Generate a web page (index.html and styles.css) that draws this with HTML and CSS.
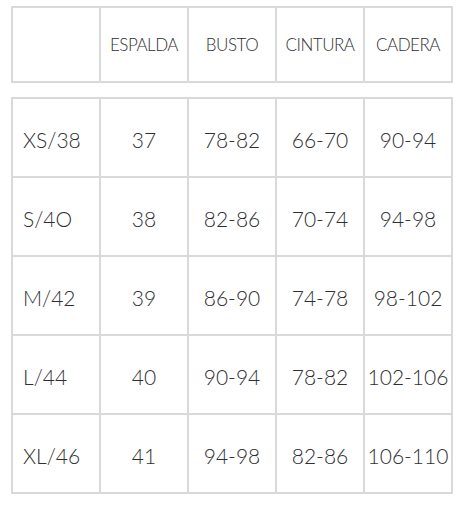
FILE: index.html
```html
<!DOCTYPE html>
<html lang="es">
<head>
<meta charset="utf-8">
<title>Tabla de tallas</title>
<link rel="stylesheet" href="styles.css">
</head>
<body>
<div class="page">
  <div class="grid head">
    <div class="cell"></div>
    <div class="cell">ESPALDA</div>
    <div class="cell">BUSTO</div>
    <div class="cell">CINTURA</div>
    <div class="cell">CADERA</div>
  </div>
  <div class="grid body">
    <div class="cell size">XS/38</div><div class="cell">37</div><div class="cell">78-82</div><div class="cell">66-70</div><div class="cell">90-94</div>
    <div class="cell size">S/4O</div><div class="cell">38</div><div class="cell">82-86</div><div class="cell">70-74</div><div class="cell">94-98</div>
    <div class="cell size">M/42</div><div class="cell">39</div><div class="cell">86-90</div><div class="cell">74-78</div><div class="cell">98-102</div>
    <div class="cell size">L/44</div><div class="cell">40</div><div class="cell">90-94</div><div class="cell">78-82</div><div class="cell">102-106</div>
    <div class="cell size">XL/46</div><div class="cell">41</div><div class="cell">94-98</div><div class="cell">82-86</div><div class="cell">106-110</div>
  </div>
</div>
</body>
</html>
```
FILE: styles.css
```css
html, body {
  margin: 0;
  padding: 0;
  background: #ffffff;
}
.page {
  padding: 6px 0 0 11px;
  display: flex;
  flex-direction: column;
  gap: 14px;
  font-family: "Lato", "Open Sans", sans-serif;
  font-weight: 300;
  color: #2f2f33;
}
.grid {
  display: grid;
  width: 442px;
  box-sizing: border-box;
  grid-template-columns: repeat(5, 86px);
  gap: 2px;
  padding: 2px;
  background: #d9d9d9;
}
.head {
  grid-template-rows: 73px;
}
.body {
  grid-template-rows: repeat(5, 77px);
}
.cell {
  background: #ffffff;
  display: flex;
  align-items: center;
  justify-content: center;
  white-space: nowrap;
}
.head .cell {
  font-size: 17px;
  letter-spacing: -0.5px;
}
.body .cell {
  font-size: 21px;
  padding-top: 3px;
  box-sizing: border-box;
}
.body .cell.size {
  justify-content: flex-start;
  padding-left: 10px;
}
```
